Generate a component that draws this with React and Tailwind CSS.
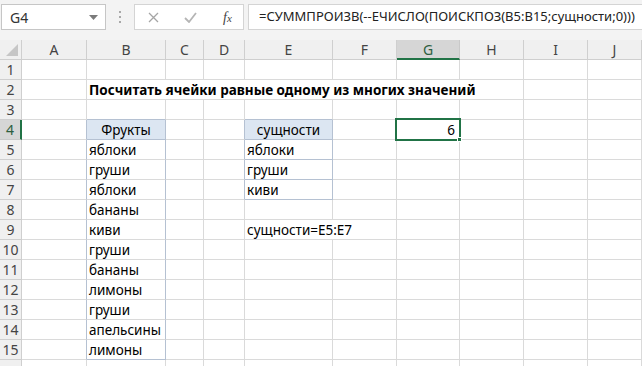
import React from 'react';

const COLS = ['A', 'B', 'C', 'D', 'E', 'F', 'G', 'H', 'I', 'J'];
const GRID = 'grid grid-cols-[22px_65px_79px_38px_41px_88px_64px_63px_64px_64px_1fr]';

const fruits = ['яблоки', 'груши', 'яблоки', 'бананы', 'киви', 'груши', 'бананы', 'лимоны', 'груши', 'апельсины', 'лимоны'];
const entities = ['яблоки', 'груши', 'киви'];

const cellBase = 'h-5 border-b border-r border-[#dadada] px-[2px] text-[13.5px] leading-[20px] text-black whitespace-nowrap';

const RowHead = ({ n }) => (
  <div
    className={
      n === 4
        ? 'h-5 border-b border-[#c9c9c9] border-r-2 border-r-[#217346] bg-[#d6d6d6] text-center text-[14px] leading-[19px] text-[#2d5e3e]'
        : 'h-5 border-b border-r border-[#cfcfcf] bg-[#f0f0f0] text-center text-[14px] leading-[19px] text-[#444]'
    }
  >
    {n < 16 ? n : ''}
  </div>
);

const Cell = ({ r, c, className = '', children }) => {
  let extra = '';
  // light table frame around B4:B15 and E4:E7
  if (c === 'A' && r >= 4 && r <= 15) extra += ' border-r-[#b5c1d2]';
  if (c === 'B' && r >= 4 && r <= 15) extra += ' border-r-[#b5c1d2]';
  if (c === 'B' && (r === 4 || r === 15)) extra += ' border-b-[#b5c1d2]';
  if (c === 'D' && r >= 4 && r <= 7) extra += ' border-r-[#b5c1d2]';
  if (c === 'E' && r >= 4 && r <= 7) extra += ' border-r-[#b5c1d2] border-b-[#b5c1d2]';
  if (c === 'B' && r === 3) extra += ' border-b-[#b5c1d2]';
  if (c === 'E' && r === 3) extra += ' border-b-[#b5c1d2]';
  return <div className={`${cellBase}${extra} ${className}`}>{children}</div>;
};

function renderRow(r) {
  if (r === 2) {
    return (
      <>
        <Cell r={r} c="A" />
        <div className={`${cellBase} col-span-7 font-bold`}>Посчитать ячейки равные одному из многих значений</div>
        <Cell r={r} c="I" />
        <Cell r={r} c="J" />
      </>
    );
  }
  if (r === 9) {
    return (
      <>
        <Cell r={r} c="A" />
        <Cell r={r} c="B">{fruits[4]}</Cell>
        <Cell r={r} c="C" />
        <Cell r={r} c="D" />
        <div className={`${cellBase} col-span-2`}>сущности=E5:E7</div>
        <Cell r={r} c="G" />
        <Cell r={r} c="H" />
        <Cell r={r} c="I" />
        <Cell r={r} c="J" />
      </>
    );
  }
  return COLS.map((c) => {
    if (c === 'B' && r === 4) return <Cell key={c} r={r} c={c} className="bg-[#dce6f2] text-center">Фрукты</Cell>;
    if (c === 'B' && r >= 5 && r <= 15) return <Cell key={c} r={r} c={c}>{fruits[r - 5]}</Cell>;
    if (c === 'E' && r === 4) return <Cell key={c} r={r} c={c} className="bg-[#dce6f2] text-center">сущности</Cell>;
    if (c === 'E' && r >= 5 && r <= 7) return <Cell key={c} r={r} c={c}>{entities[r - 5]}</Cell>;
    if (c === 'G' && r === 4)
      return (
        <Cell key={c} r={r} c={c} className="relative text-right pr-[4px]">
          6
          <div className="absolute -left-[2px] -top-[2px] h-[23px] w-[66px] border-2 border-[#217346]" />
          <div className="absolute -bottom-[3px] -right-[3px] h-[5px] w-[5px] border border-white bg-[#217346]" />
        </Cell>
      );
    return <Cell key={c} r={r} c={c} />;
  });
}

export default function App() {
  const rows = Array.from({ length: 16 }, (_, i) => i + 1);
  return (
    <div className="h-[366px] w-[642px] overflow-hidden bg-white font-['Noto_Sans',sans-serif]">
      {/* Formula bar */}
      <div className="flex h-10 items-start bg-[#f3f3f3] pt-[4px]">
        <div className="ml-[1px] flex h-[26px] w-[105px] shrink-0 items-center justify-between border border-[#c6c6c6] bg-white pl-[8px] pr-[7px]">
          <span className="text-[14px] text-[#333]">G4</span>
          <svg width="9" height="5" viewBox="0 0 9 5">
            <path d="M0 0h9L4.5 5z" fill="#7b7b7b" />
          </svg>
        </div>
        <div className="flex w-[28px] shrink-0 flex-col items-center gap-[3px] pt-[7px]">
          <span className="h-[2px] w-[2px] bg-[#a8a8a8]" />
          <span className="h-[2px] w-[2px] bg-[#a8a8a8]" />
          <span className="h-[2px] w-[2px] bg-[#a8a8a8]" />
        </div>
        <div className="flex h-[26px] w-[110px] shrink-0 items-center border border-[#d4d4d4] bg-white">
          <svg className="ml-[13px]" width="11" height="11" viewBox="0 0 11 11">
            <path d="M1 1l9 9M10 1l-9 9" stroke="#a5a5a5" strokeWidth="1.3" />
          </svg>
          <svg className="ml-[25px]" width="13" height="11" viewBox="0 0 13 11">
            <path d="M1 6l4 4 7-9" stroke="#b5b5b5" strokeWidth="1.8" fill="none" />
          </svg>
          <span className="ml-[26px] font-['Liberation_Serif',serif] text-[14px] italic text-[#444]">
            f<span className="text-[11px]">x</span>
          </span>
        </div>
        <div className="ml-[4px] flex h-[26px] min-w-0 flex-1 items-center overflow-hidden border border-r-0 border-[#d4d4d4] bg-white pl-[10px]">
          <span className="whitespace-nowrap text-[13px] text-[#222]">=СУММПРОИЗВ(--ЕЧИСЛО(ПОИСКПОЗ(B5:B15;сущности;0)))</span>
        </div>
      </div>

      {/* Column headers */}
      <div className={`${GRID} h-5 bg-[#f0f0f0]`}>
        <div className="relative h-5 border-b border-r border-[#cfcfcf]">
          <svg className="absolute bottom-[3px] right-[3px]" width="12" height="12" viewBox="0 0 12 12">
            <path d="M12 0v12H0z" fill="#c6c6c6" />
          </svg>
        </div>
        {COLS.map((c) =>
          c === 'G' ? (
            <div key={c} className="h-5 border-r border-[#c9c9c9] border-b-2 border-b-[#217346] bg-[#d6d6d6] text-center text-[14px] leading-[19px] text-[#2d5e3e]">
              {c}
            </div>
          ) : (
            <div key={c} className="h-5 border-b border-r border-[#cfcfcf] text-center text-[14px] leading-[19px] text-[#444]">
              {c}
            </div>
          )
        )}
      </div>

      {/* Rows */}
      {rows.map((r) => (
        <div key={r} className={GRID}>
          <RowHead n={r} />
          {renderRow(r)}
        </div>
      ))}
    </div>
  );
}
